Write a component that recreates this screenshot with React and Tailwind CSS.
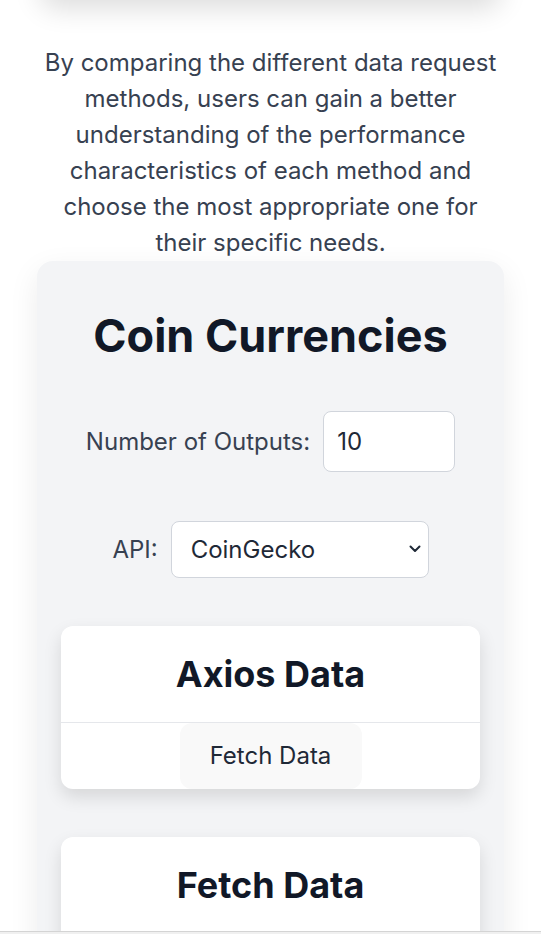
import React from "react";

function DataCard({ title }) {
  return (
    <div className="bg-white rounded-xl shadow-[0_8px_18px_rgba(0,0,0,0.12)]">
      <h3 className="pt-[28px] pb-[28px] text-[36px] leading-[40px] font-bold text-[#111827] text-center border-b border-gray-200">
        {title}
      </h3>
      <div className="flex justify-center">
        <button className="w-[182px] h-[66px] rounded-xl bg-[#f9f9f9] text-[24px] text-[#1f2937]">
          Fetch Data
        </button>
      </div>
    </div>
  );
}

export default function App() {
  return (
    <div
      className="min-h-screen bg-white overflow-hidden"
      style={{ fontFamily: "Inter, 'Noto Sans', sans-serif" }}
    >
      <div className="mx-[40px] h-[40px] -mt-[42px] rounded-2xl bg-white shadow-[0_10px_28px_rgba(0,0,0,0.14)]" />
      <p className="mt-[47px] px-[40px] text-center text-[24px] leading-[36px] text-[#374151]">
        By comparing the different data request methods, users can gain a better understanding of the performance characteristics of each method and choose the most appropriate one for their specific needs.
      </p>
      <div className="mx-[37px] rounded-2xl bg-[#f3f4f6] shadow-[0_10px_30px_rgba(0,0,0,0.08)] px-6 pb-12">
        <h2 className="pt-[51px] text-[45px] leading-[48px] font-bold text-[#111827] text-center">
          Coin Currencies
        </h2>
        <div className="mt-[51px] flex items-center justify-center gap-[13px]">
          <label className="text-[24px] text-[#374151]">Number of Outputs:</label>
          <input
            type="number"
            defaultValue="10"
            className="w-[132px] h-[61px] rounded-lg border border-gray-300 bg-white px-[13px] text-[24px] text-[#1f2937] outline-none"
          />
        </div>
        <div className="mt-[49px] flex items-center justify-center gap-[13px]">
          <label className="text-[24px] text-[#374151]">API:</label>
          <div className="relative">
            <select className="appearance-none w-[258px] h-[57px] rounded-lg border border-gray-300 bg-white pl-[19px] text-[24px] text-[#1f2937] outline-none">
              <option>CoinGecko</option>
            </select>
            <svg
              className="absolute right-[8px] top-[24px] pointer-events-none"
              width="12"
              height="8"
              viewBox="0 0 12 8"
              fill="none"
            >
              <path d="M1.5 1.5 L6 6 L10.5 1.5" stroke="#1f2937" strokeWidth="2" strokeLinecap="round" strokeLinejoin="round" />
            </svg>
          </div>
        </div>
        <div className="mt-[48px] flex flex-col gap-[48px]">
          <DataCard title="Axios Data" />
          <DataCard title="Fetch Data" />
        </div>
      </div>
      <div className="fixed left-0 right-0 bottom-0 h-[3px] border-t border-[#d4d4d4] bg-[#f0f0f0]" />
    </div>
  );
}
